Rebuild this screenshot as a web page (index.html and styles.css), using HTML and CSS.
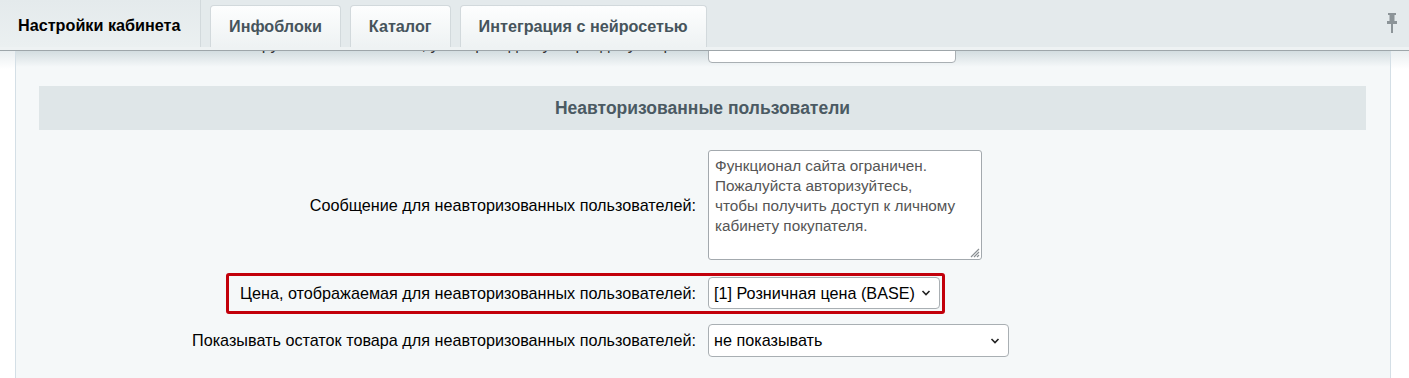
FILE: index.html
```html
<!DOCTYPE html>
<html lang="ru">
<head>
<meta charset="utf-8">
<link rel="stylesheet" href="styles.css">
</head>
<body>
<div class="tabbar">
  <div class="tab tab-active">Настройки кабинета</div>
  <div class="tab">Инфоблоки</div>
  <div class="tab">Каталог</div>
  <div class="tab">Интеграция с нейросетью</div>
  <div class="spacer"></div>
  <svg class="pin" width="14" height="22" viewBox="0 0 14 22">
    <path d="M3 1h8v2H9.5v6H12v3H8v9H6v-9H2V9h2.5V3H3z" fill="#8c9498"/>
  </svg>
</div>
<div class="strip"></div>
<div class="main">
  <div class="edge"></div>
  <div class="panel">
    <div class="row row-clip">
      <div class="label">Группа пользователей, у которых доступ к разделу открыт:</div>
      <div class="field"><div class="select select-top"></div></div>
    </div>
    <div class="heading">Неавторизованные пользователи</div>
    <div class="row row-text">
      <div class="label">Сообщение для неавторизованных пользователей:</div>
      <div class="field">
        <div class="textarea">Функционал сайта ограничен.<br>Пожалуйста авторизуйтесь,<br>чтобы получить доступ к личному<br>кабинету покупателя.
          <svg class="grip" width="12" height="12" viewBox="0 0 12 12"><path d="M11 3L3 11M11 6L6 11M11 9L9 11" stroke="#8a8f93" stroke-width="1.2" fill="none"/></svg>
        </div>
      </div>
    </div>
    <div class="row row-sel1">
      <div class="mark"></div>
      <div class="label">Цена, отображаемая для неавторизованных пользователей:</div>
      <div class="field">
        <div class="select select-1"><span>[1] Розничная цена (BASE)</span>
          <svg class="chev" width="10" height="6" viewBox="0 0 10 6"><path d="M1.5 1l3.5 3.5L8.5 1" stroke="#222" stroke-width="1.6" fill="none"/></svg>
        </div>
      </div>
    </div>
    <div class="row row-sel2">
      <div class="label">Показывать остаток товара для неавторизованных пользователей:</div>
      <div class="field">
        <div class="select select-2"><span>не показывать</span>
          <svg class="chev" width="10" height="6" viewBox="0 0 10 6"><path d="M1.5 1l3.5 3.5L8.5 1" stroke="#222" stroke-width="1.6" fill="none"/></svg>
        </div>
      </div>
    </div>
  </div>
  <div class="edge-right"></div>
</div>
</body>
</html>
```
FILE: styles.css
```css
* { box-sizing: border-box; }
html, body { margin: 0; padding: 0; }
body {
  width: 1409px;
  height: 378px;
  overflow: hidden;
  font-family: "Liberation Sans", Arial, sans-serif;
  background: #ffffff;
}
.tabbar {
  height: 47px;
  display: flex;
  align-items: flex-end;
  background: #e4eaec;
  gap: 9px;
}
.tab {
  height: 42px;
  padding: 0 18px;
  display: flex;
  align-items: center;
  font-weight: bold;
  font-size: 16.2px;
  color: #46545c;
  background: linear-gradient(#fdfefe, #eef2f3);
  border: 1px solid #d2d9dc;
  border-bottom: none;
  border-radius: 4px 4px 0 0;
}
.tab-active {
  height: 47px;
  width: 201px;
  color: #000;
  background: linear-gradient(#e4eaec, #ebf0f1);
  border: none;
  border-right: 1px solid #d2d9dc;
  border-radius: 0;
  padding-top: 4px;
}
.spacer { flex: 1; }
.pin { align-self: flex-start; margin: 12px 10px 0 0; }
.strip {
  height: 4px;
  background: #eef2f3;
  border-bottom: 1px solid #9ea6aa;
}
.main {
  display: flex;
  height: 328px;
}
.edge {
  width: 16px;
  background: linear-gradient(#e9eef0, #ffffff 18px);
  border-right: 1px solid #d4dfe6;
}
.edge-right {
  width: 19px;
  background: linear-gradient(#e9eef0, #ffffff 18px);
  border-left: 1px solid #d4dfe6;
}
.panel {
  position: relative;
  flex: 1;
  background: #f5f8f9;
  padding: 0 24px 0 23px;
  display: flex;
  flex-direction: column;
}
.panel::before {
  content: "";
  position: absolute;
  left: 0;
  right: 0;
  top: 0;
  height: 16px;
  background: linear-gradient(rgba(205,216,220,0.85), rgba(245,248,249,0));
  pointer-events: none;
}
.row {
  display: grid;
  grid-template-columns: 669px 1fr;
  align-items: center;
  position: relative;
  font-size: 16.2px;
  color: #000;
}
.label {
  text-align: right;
  padding-right: 12px;
  white-space: nowrap;
}
.row-clip {
  height: 13px;
  grid-template-rows: 13px;
  overflow: hidden;
  align-items: start;
  color: #333;
}
.row-clip .label { line-height: 14px; margin-top: -14px; }
.select-top {
  width: 248px;
  height: 32px;
  margin-top: -20px;
  background: #f3f6f7;
}
.heading {
  margin-top: 22px;
  height: 44px;
  background: #dfe6e8;
  display: flex;
  align-items: center;
  justify-content: center;
  font-weight: bold;
  font-size: 17.5px;
  color: #4b5a63;
}
.row-text { margin-top: 20px; }
.textarea {
  position: relative;
  width: 274px;
  height: 110px;
  background: #fff;
  border: 1px solid #a3a9ae;
  border-radius: 3px;
  padding: 5px 6px;
  font-size: 15.3px;
  line-height: 20px;
  color: #555;
}
.grip { position: absolute; right: 1px; bottom: 1px; }
.select {
  height: 32px;
  background: #fff;
  border: 1px solid #a9afb3;
  border-radius: 4px;
  display: flex;
  align-items: center;
  justify-content: space-between;
  padding: 0 8px 0 5px;
  font-size: 16.2px;
  color: #000;
}
.row-sel1 { margin-top: 17px; height: 32px; }
.select-1 { width: 232px; }
.row-sel2 { margin-top: 15px; height: 33px; }
.select-2 { width: 301px; height: 33px; }
.mark {
  position: absolute;
  left: 187px;
  top: -4px;
  width: 719px;
  height: 41px;
  border: 3px solid #c2000b;
  border-radius: 3px;
  pointer-events: none;
}
```
